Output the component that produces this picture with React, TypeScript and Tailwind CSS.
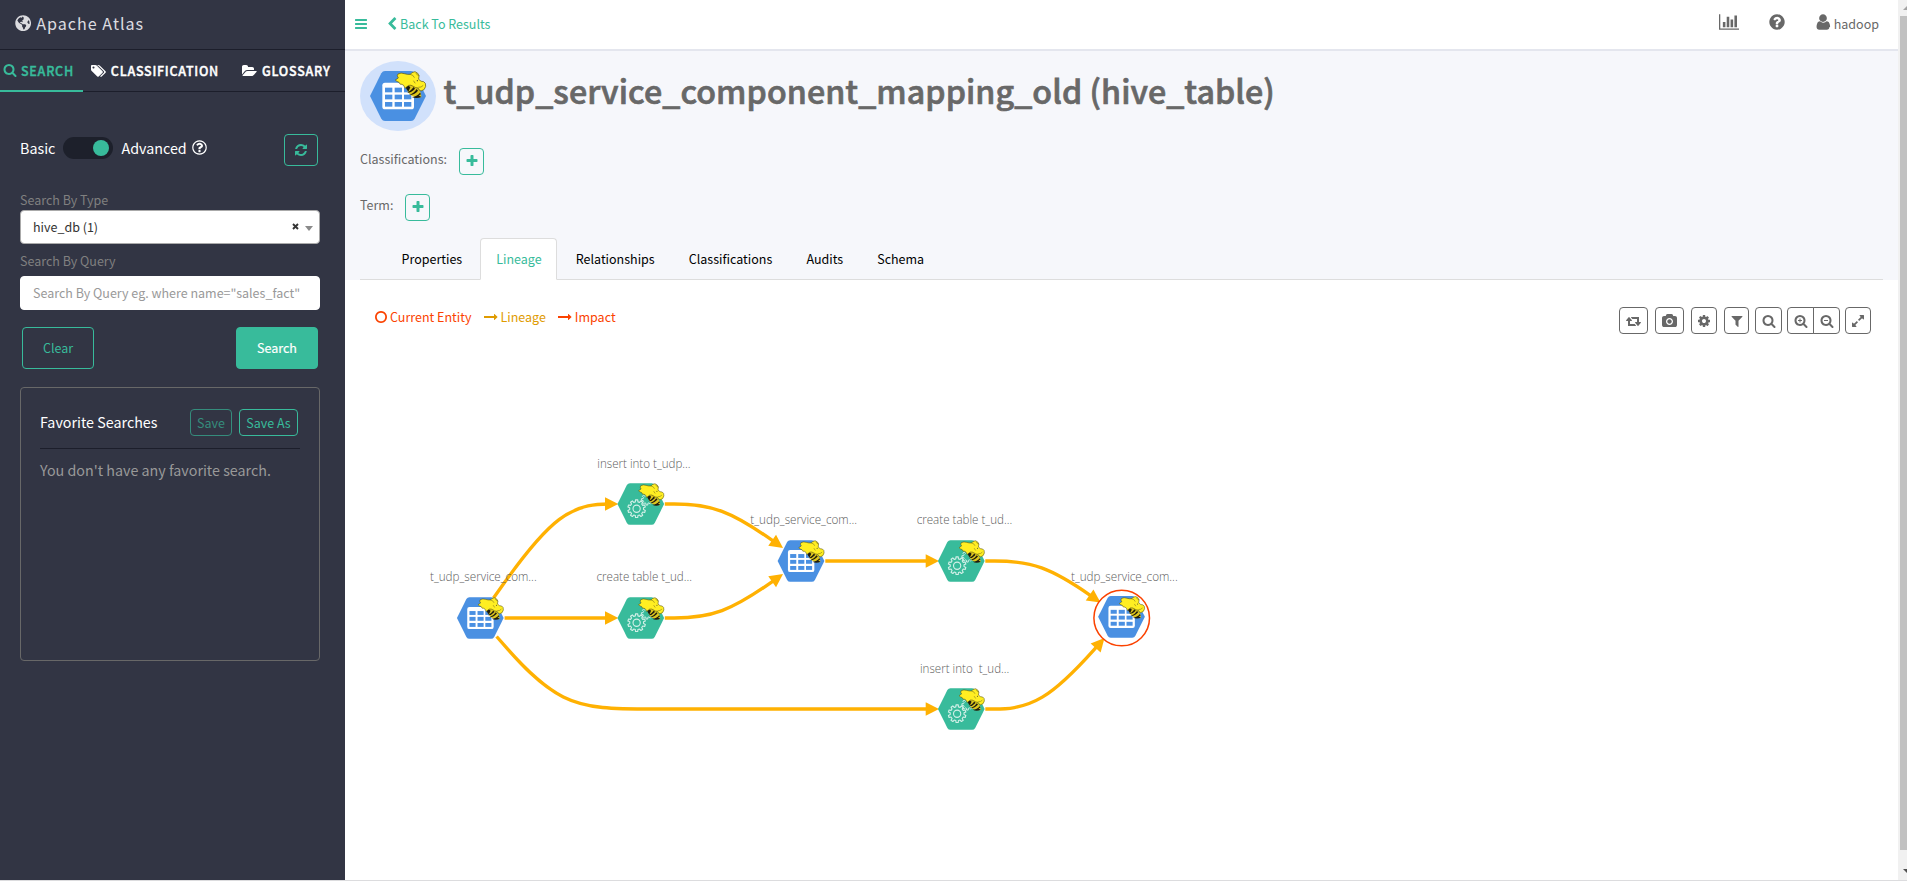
import React from "react";
import { FaGlobeAmericas } from "react-icons/fa";

const FONT = "font-['Noto_Sans_CJK_SC',sans-serif]";

const LENS =
  "M1216 832q0-185-131.5-316.5t-316.5-131.5-316.5 131.5-131.5 316.5 131.5 316.5 316.5 131.5 316.5-131.5 131.5-316.5zm512 832q0 52-38 90t-90 38q-54 0-90-38l-343-342q-179 124-399 124-143 0-273.5-55.5t-225-150-150-225-55.5-273.5 55.5-273.5 150-225 225-150 273.5-55.5 273.5 55.5 225 150 150 225 55.5 273.5q0 220-124 399l343 343q37 37 37 90z";

const ICONS = {
  search: { w: 1792, d: LENS },
  searchPlus: {
    w: 1792,
    d: "M1024 800v64q0 13-9.5 22.5t-22.5 9.5h-160v160q0 13-9.5 22.5t-22.5 9.5h-64q-13 0-22.5-9.5t-9.5-22.5v-160h-160q-13 0-22.5-9.5t-9.5-22.5v-64q0-13 9.5-22.5t22.5-9.5h160v-160q0-13 9.5-22.5t22.5-9.5h64q13 0 22.5 9.5t9.5 22.5v160h160q13 0 22.5 9.5t9.5 22.5z" + LENS,
  },
  searchMinus: {
    w: 1792,
    d: "M1024 800v64q0 13-9.5 22.5t-22.5 9.5h-448q-13 0-22.5-9.5t-9.5-22.5v-64q0-13 9.5-22.5t22.5-9.5h448q13 0 22.5 9.5t9.5 22.5z" + LENS,
  },
  plus: {
    w: 1792,
    d: "M1600 736v192q0 40-28 68t-68 28h-416v416q0 40-28 68t-68 28h-192q-40 0-68-28t-28-68v-416h-416q-40 0-68-28t-28-68v-192q0-40 28-68t68-28h416v-416q0-40 28-68t68-28h192q40 0 68 28t28 68v416h416q40 0 68 28t28 68z",
  },
  refresh: {
    w: 1792,
    d: "M1639 1056q0 5-1 7-64 268-268 434.5t-478 166.5q-146 0-282.5-55t-243.5-157l-129 129q-19 19-45 19t-45-19-19-45v-448q0-26 19-45t45-19h448q26 0 45 19t19 45-19 45l-137 137q71 66 161 102t187 36q134 0 250-65t186-179q11-17 53-117 8-23 30-23h192q13 0 22.5 9.5t9.5 22.5zm25-800v448q0 26-19 45t-45 19h-448q-26 0-45-19t-19-45 19-45l138-138q-148-137-349-137-134 0-250 65t-186 179q-11 17-53 117-8 23-30 23h-199q-13 0-22.5-9.5t-9.5-22.5v-7q65-268 270-434.5t480-166.5q146 0 284 55.5t245 156.5l130-129q19-19 45-19t45 19 19 45z",
  },
  question: {
    w: 1792,
    d: "M1024 1376v-192q0-14-9-23t-23-9h-192q-14 0-23 9t-9 23v192q0 14 9 23t23 9h192q14 0 23-9t9-23zm256-672q0-88-55.5-163t-138.5-116-170-41q-243 0-371 213-15 24 8 42l132 100q7 6 19 6 16 0 25-12 53-68 86-92 34-24 86-24 48 0 85.5 26t37.5 59q0 38-20 61t-68 45q-63 28-115.5 86.5t-52.5 125.5v36q0 14 9 23t23 9h192q14 0 23-9t9-23q0-19 21.5-49.5t54.5-49.5q32-18 49-28.5t46-35 44.5-48 28-60.5 12.5-81zm384 192q0 209-103 385.5t-279.5 279.5-385.5 103-385.5-103-279.5-279.5-103-385.5 103-385.5 279.5-279.5 385.5-103 385.5 103 279.5 279.5 103 385.5z",
  },
  questionOutline: {
    w: 1792,
    d: "M1008 1200v160q0 14-9 23t-23 9h-160q-14 0-23-9t-9-23v-160q0-14 9-23t23-9h160q14 0 23 9t9 23zm256-496q0 50-15 90t-45.5 69-52 44-59.5 36q-32 18-46.5 28t-26 24-11.5 29v32q0 14-9 23t-23 9h-160q-14 0-23-9t-9-23v-68q0-35 10.5-64.5t24-47.5 39-35.5 41-25.5 44.5-21q53-25 75-43t22-49q0-42-43.5-71.5t-95.5-29.5q-56 0-95 27-29 20-80 83-9 12-25 12-11 0-19-6l-108-82q-10-7-12-20t5-23q122-192 349-192 129 0 238.5 89.5t109.5 214.5zm-368-448q-130 0-248.5 51t-204 136.5-136.5 204-51 248.5 51 248.5 136.5 204 204 136.5 248.5 51 248.5-51 204-136.5 136.5-204 51-248.5-51-248.5-136.5-204-204-136.5-248.5-51zm768 640q0 209-103 385.5t-279.5 279.5-385.5 103-385.5-103-279.5-279.5-103-385.5 103-385.5 279.5-279.5 385.5-103 385.5 103 279.5 279.5 103 385.5z",
  },
  user: {
    w: 1792,
    d: "M1536 1405q0 120-73 189.5t-194 69.5h-746q-121 0-194-69.5t-73-189.5q0-53 3.5-103.5t14-109 26.5-108.5 43-97.5 62-81 85.5-53.5 111.5-20q9 0 42 21.5t74.5 48 108 48 70 21.5 133-21.5 108-48 74.5-48 42-21.5q61 0 111.5 20t85.5 53.5 62 81 43 97.5 26.5 108.5 14 109 3.5 103.5zm-256-893q0 159-112.5 271.5t-271.5 112.5-271.5-112.5-112.5-271.5 112.5-271.5 271.5-112.5 271.5 112.5 112.5 271.5z",
  },
  chart: {
    w: 2048,
    d: "M640 896v512h-256v-512h256zm384-512v1024h-256v-1024h256zm1024 1152v128h-2048v-1536h128v1408h1920zm-640-896v768h-256v-768h256zm384-384v1152h-256v-1152h256z",
  },
  bars: {
    w: 1792,
    d: "M1664 1344v128q0 26-19 45t-45 19h-1408q-26 0-45-19t-19-45v-128q0-26 19-45t45-19h1408q26 0 45 19t19 45zm0-512v128q0 26-19 45t-45 19h-1408q-26 0-45-19t-19-45v-128q0-26 19-45t45-19h1408q26 0 45 19t19 45zm0-512v128q0 26-19 45t-45 19h-1408q-26 0-45-19t-19-45v-128q0-26 19-45t45-19h1408q26 0 45 19t19 45z",
  },
  chevronLeft: {
    w: 1792,
    d: "M1427 301l-531 531 531 531q19 19 19 45t-19 45l-166 166q-19 19-45 19t-45-19l-742-742q-19-19-19-45t19-45l742-742q19-19 45-19t45 19l166 166q19 19 19 45t-19 45z",
  },
  folderOpen: {
    w: 1920,
    d: "M1879 952q0 31-31 66l-336 396q-43 51-120.5 86.5t-143.5 35.5h-1088q-34 0-60.5-13t-26.5-43q0-31 31-66l336-396q43-51 120.5-86.5t143.5-35.5h1088q34 0 60.5 13t26.5 43zm-343-344v160h-832q-94 0-197 47.5t-164 119.5l-337 396-5 6q0-4-.5-12.5t-.5-12.5v-960q0-92 66-158t158-66h320q92 0 158 66t66 158v32h544q92 0 158 66t66 158z",
  },
  tags: {
    w: 1899,
    d: "M448 448q0-53-37.5-90.5t-90.5-37.5-90.5 37.5-37.5 90.5 37.5 90.5 90.5 37.5 90.5-37.5 37.5-90.5zm1067 576q0 53-37 90l-491 492q-39 37-91 37-53 0-90-37l-715-716q-38-37-64.5-101t-26.5-117v-416q0-52 38-90t90-38h416q53 0 117 26.5t102 64.5l715 714q37 39 37 91zm384 0q0 53-37 90l-491 492q-39 37-91 37-36 0-59-14t-53-45l470-470q37-37 37-90 0-52-37-91l-715-714q-38-38-102-64.5t-117-26.5h224q53 0 117 26.5t102 64.5l715 714q37 39 37 91z",
  },
  camera: {
    w: 1920,
    d: "M960 672q119 0 203.5 84.5t84.5 203.5-84.5 203.5-203.5 84.5-203.5-84.5-84.5-203.5 84.5-203.5 203.5-84.5zm704-416q106 0 181 75t75 181v896q0 106-75 181t-181 75h-1408q-106 0-181-75t-75-181v-896q0-106 75-181t181-75h224l51-136q19-49 69.5-84.5t103.5-35.5h512q53 0 103.5 35.5t69.5 84.5l51 136h224zm-704 1152q185 0 316.5-131.5t131.5-316.5-131.5-316.5-316.5-131.5-316.5 131.5-131.5 316.5 131.5 316.5 316.5 131.5z",
  },
  cog: {
    w: 1792,
    d: "M1152 896q0-106-75-181t-181-75-181 75-75 181 75 181 181 75 181-75 75-181zm512-109v222q0 12-8 23t-20 13l-185 28q-19 54-39 91 35 50 107 138 10 12 10 25t-9 23q-27 37-99 108t-94 71q-12 0-26-9l-138-108q-44 23-91 38-16 136-29 186-7 28-36 28h-222q-14 0-24.5-8.5t-11.5-21.5l-28-184q-49-16-90-37l-141 107q-10 9-25 9-14 0-25-11-126-114-165-168-7-10-7-23 0-12 8-23 15-21 51-66.5t54-70.5q-27-50-41-99l-183-27q-13-2-21-12.5t-8-23.5v-222q0-12 8-23t19-13l186-28q14-46 39-92-40-57-107-138-10-12-10-24 0-10 9-23 26-36 98.5-107.5t94.5-71.5q13 0 26 10l138 107q44-23 91-38 16-136 29-186 7-28 36-28h222q14 0 24.5 8.5t11.5 21.5l28 184q49 16 90 37l142-107q9-9 24-9 13 0 25 10 129 119 165 170 7 8 7 22 0 12-8 23-15 21-51 66.5t-54 70.5q26 50 41 98l183 28q13 2 21 12.5t8 23.5z",
  },
  filter: {
    w: 1792,
    d: "M1595 295q17 41-14 70l-493 493v742q0 42-39 59-13 5-25 5-27 0-45-19l-256-256q-19-19-19-45v-486l-493-493q-31-29-14-70 17-39 59-39h1280q42 0 59 39z",
  },
  retweet: {
    w: 1920,
    d: "M1280 1504q0 13-9.5 22.5t-22.5 9.5h-960q-8 0-13.5-2t-9-7-5.5-8-3-11.5-1-11.5v-600h-192q-26 0-45-19t-19-45q0-24 15-41l320-384q19-22 49-22t49 22l320 384q15 17 15 41 0 26-19 45t-45 19h-192v384h576q16 0 25 11l160 192q7 10 7 21zm640-416q0 24-15 41l-320 384q-20 23-49 23t-49-23l-320-384q-15-17-15-41 0-26 19-45t45-19h192v-384h-576q-16 0-25-12l-160-192q-7-9-7-20 0-13 9.5-22.5t22.5-9.5h960q8 0 13.5 2t9 7 5.5 8 3 11.5 1 11.5v600h192q26 0 45 19t19 45z",
  },
  expand: {
    w: 1792,
    d: "M883 1056q0 13-10 23l-332 332 144 144q19 19 19 45t-19 45-45 19h-448q-26 0-45-19t-19-45v-448q0-26 19-45t45-19 45 19l144 144 332-332q10-10 23-10t23 10l114 114q10 10 10 23zm781-864v448q0 26-19 45t-45 19-45-19l-144-144-332 332q-10 10-23 10t-23-10l-114-114q-10-10-10-23t10-23l332-332-144-144q-19-19-19-45t19-45 45-19h448q26 0 45 19t19 45z",
  },
  circle: {
    w: 1792,
    d: "M896 352q-148 0-273 73t-198 198-73 273 73 273 198 198 273 73 273-73 198-198 73-273-73-273-198-198-273-73zm768 544q0 209-103 385.5t-279.5 279.5-385.5 103-385.5-103-279.5-279.5-103-385.5 103-385.5 279.5-279.5 385.5-103 385.5 103 279.5 279.5 103 385.5z",
  },
  arrowRight: {
    w: 1792,
    d: "M1728 893q0 14-10 24l-384 354q-16 14-35 6-19-9-19-29v-224h-1248q-14 0-23-9t-9-23v-192q0-14 9-23t23-9h1248v-224q0-21 19-29t35 5l384 350q10 10 10 23z",
  },
};

function Icon({ name, size = 14, className = "" }: { name: keyof typeof ICONS; size?: number; className?: string }) {
  const icon = ICONS[name];
  return (
    <svg
      className={"shrink-0 " + className}
      width={(icon.w / 1792) * size}
      height={size}
      viewBox={`0 0 ${icon.w} 1792`}
      fill="currentColor"
    >
      <path d={icon.d} />
    </svg>
  );
}

/* ---------- entity artwork ---------- */

function gearPath(cx: number, cy: number, outer: number, inner: number, teeth: number) {
  const step = (Math.PI * 2) / teeth;
  const pts: string[] = [];
  for (let i = 0; i < teeth; i++) {
    const a = i * step - Math.PI / 2;
    const offsets: [number, number][] = [
      [-0.3, inner],
      [-0.2, outer],
      [0.2, outer],
      [0.3, inner],
    ];
    offsets.forEach(([o, r]) => {
      const t = a + o * step;
      pts.push(`${(cx + r * Math.cos(t)).toFixed(1)} ${(cy + r * Math.sin(t)).toFixed(1)}`);
    });
  }
  return "M" + pts.join("L") + "Z";
}

function HiveBee() {
  return (
    <g>
      <path d="M183 257Q196 250 210 256L220 266Q229 276 229 292Q212 294 200 287Q186 277 183 257Z" fill="#dcc51e" />
      <path
        d="M181 259Q184 270 190 275L196 262Q190 255 181 259ZM187 278Q198 279 210 266L206 261Q199 271 187 278ZM192 285Q207 286 219 272L215 267Q207 280 192 285ZM200 291Q216 290 225 278L228 283L221 286L229 291Q214 297 200 291Z"
        fill="#1d1b0e"
      />
      <path
        d="M151 240L160 234Q154 227 159 222Q168 217 178 221Q188 224 196 223Q200 216 210 215Q220 218 222 227L221 238Q228 246 236 245Q243 248 242 259Q240 271 228 273Q221 271 219 264Q211 264 205 259Q198 254 191 256L180 265Q178 255 171 253Q164 255 162 247Q155 245 151 240Z"
        fill="#ffee22"
        stroke="#57500f"
        strokeWidth="2"
        strokeLinejoin="round"
      />
      <path
        d="M196 223Q205 224 208 232M222 227Q215 226 213 220M221 262Q229 263 234 257M206 243L210 249"
        fill="none"
        stroke="#7c721c"
        strokeWidth="2"
        strokeLinecap="round"
      />
      <circle cx="217" cy="242" r="1.8" fill="#333" />
    </g>
  );
}

function EntityShape({ kind }: { kind: "table" | "process" }) {
  const color = kind === "table" ? "#4a90e2" : "#38bb9b";
  return (
    <g>
      <path
        d="M120 213H198Q205 213 209 220L243 288L209 356Q205 363 198 363H120Q113 363 109 356L75 288L109 220Q113 213 120 213Z"
        fill={color}
      />
      {kind === "table" ? (
        <g>
          <rect x="112" y="248" width="95" height="80" rx="8" fill="#fff" />
          {[263, 284, 306].map((y) =>
            [120, 149, 177].map((x) => <rect key={`${x}-${y}`} x={x} y={y} width="22" height="14" fill={color} />)
          )}
        </g>
      ) : (
        <g fill="none" stroke="#d3f0e8" strokeWidth="4" strokeLinejoin="round">
          <path d={gearPath(144, 305, 32, 25, 10)} />
          <circle cx="144" cy="305" r="13" />
          <path d={gearPath(181, 272, 20, 14, 8)} strokeWidth="3.5" />
        </g>
      )}
      <HiveBee />
    </g>
  );
}

/* ---------- lineage graph ---------- */

type Pt = [number, number];

const NODES: { x: number; y: number; kind: "table" | "process"; label: string; lx: number; ly: number; lw: number }[] = [
  { x: 480.3, y: 618, kind: "table", label: "t_udp_service_com...", lx: 430, ly: 580.7, lw: 106.7 },
  { x: 640.8, y: 504, kind: "process", label: "insert into t_udp...", lx: 597.3, ly: 467.7, lw: 93.3 },
  { x: 640.8, y: 618, kind: "process", label: "create table t_ud...", lx: 596.5, ly: 580.7, lw: 95.5 },
  { x: 801, y: 561, kind: "table", label: "t_udp_service_com...", lx: 750.3, ly: 524, lw: 106.7 },
  { x: 961.3, y: 561, kind: "process", label: "create table t_ud...", lx: 916.7, ly: 524, lw: 95.5 },
  { x: 961.3, y: 709, kind: "process", label: "insert into\u00a0 t_ud...", lx: 920, ly: 673, lw: 89.3 },
  { x: 1121.5, y: 616.8, kind: "table", label: "t_udp_service_com...", lx: 1071, ly: 581, lw: 106.7 },
];

const EDGES: Pt[][] = [
  [[493.5, 598], [560.6, 504], [618.3, 504]],
  [[504.6, 618], [560.6, 618], [618.3, 618]],
  [[496.6, 636.5], [560.6, 709], [640.7, 709], [801, 709], [939, 709]],
  [[664.8, 504], [721, 504], [783, 548]],
  [[664.8, 618], [721, 618], [783, 574]],
  [[825.3, 561], [881, 561], [939, 561]],
  [[985.3, 561], [1041, 561], [1100.5, 602.5]],
  [[985.3, 709], [1041, 709], [1104.5, 638]],
];

const ARROW = 13.3;

function mix(a: Pt, b: Pt, t: number): Pt {
  return [a[0] + (b[0] - a[0]) * t, a[1] + (b[1] - a[1]) * t];
}

function basis(p: Pt[]) {
  const n = p.length;
  const end = p[n - 1];
  let d = `M${p[0]}L${mix(p[0], p[1], 1 / 6)}`;
  for (let i = 1; i < n; i++) {
    const a = p[i - 1];
    const b = p[i];
    const c1 = mix(a, b, 1 / 3);
    const c2 = mix(a, b, 2 / 3);
    const next = i < n - 1 ? p[i + 1] : null;
    const stop: Pt = next
      ? [(a[0] + 4 * b[0] + next[0]) / 6, (a[1] + 4 * b[1] + next[1]) / 6]
      : mix(a, b, 5 / 6);
    d += `C${c1} ${c2} ${stop}`;
  }
  const len = Math.hypot(end[0] - p[n - 2][0], end[1] - p[n - 2][1]);
  return d + `L${mix(p[n - 2], end, Math.max(5 / 6, 1 - (ARROW - 4) / len))}`;
}

function Edge({ points }: { points: Pt[] }) {
  const end = points[points.length - 1];
  const prev = points[points.length - 2];
  const angle = (Math.atan2(end[1] - prev[1], end[0] - prev[0]) * 180) / Math.PI;
  return (
    <g>
      <path d={basis(points)} fill="none" stroke="#ffb102" strokeWidth="3.3" />
      <path d="M0 0L-13.3 -6.7V6.7Z" fill="#ffb102" transform={`translate(${end}) rotate(${angle})`} />
    </g>
  );
}

function LineageGraph() {
  return (
    <svg className="block" width="1553" height="546" viewBox="345 334 1553 546">
      {EDGES.map((e, i) => (
        <Edge key={i} points={e} />
      ))}
      <circle cx="1121.7" cy="618" r="27.8" fill="#fff" stroke="#fb4200" strokeWidth="1.5" />
      {NODES.map((n, i) => (
        <g key={i}>
          <g transform={`translate(${n.x} ${n.y}) scale(0.2780) translate(-159 -288)`}>
            <EntityShape kind={n.kind} />
          </g>
          <text
            x={n.lx}
            y={n.ly}
            textLength={n.lw}
            lengthAdjust="spacingAndGlyphs"
            className="fill-[#5c5c5c] font-['Open_Sans',sans-serif] text-[13px] font-light"
          >
            {n.label}
          </text>
        </g>
      ))}
    </svg>
  );
}

/* ---------- sidebar ---------- */

function Sidebar() {
  return (
    <aside className="flex h-[880px] w-[345px] shrink-0 flex-col bg-[#323544]">
      <div className="flex h-[50px] items-center border-b border-[#1c1e2b] pb-[2px] pl-[15px] text-[#dcdce0]">
        <FaGlobeAmericas size={16.3} className="shrink-0" />
        <span className="-mt-px ml-[5px] text-[16.1px] leading-[24px] tracking-[1px]">Apache Atlas</span>
      </div>
      <nav className="flex h-[42px] border-b border-[#1c1e2b] text-[12.5px] font-medium tracking-[0.75px] text-white [-webkit-text-stroke:0.4px]">
        <div className="-mb-px flex w-[83px] items-center border-b-2 border-[#38bb9b] pl-[2.5px] text-[#38bb9b]">
          <Icon name="search" />
          <span className="ml-[4.5px] mt-[2px]">SEARCH</span>
        </div>
        <div className="flex w-[159px] items-center pl-[8px]">
          <Icon name="tags" />
          <span className="ml-[5px] mt-px">CLASSIFICATION</span>
        </div>
        <div className="flex items-center">
          <Icon name="folderOpen" />
          <span className="ml-[5px] mt-px">GLOSSARY</span>
        </div>
      </nav>

      <div className="mt-[42px] flex h-[32px] items-start pl-[20px] pr-[27px] text-[14.3px] leading-[28px] text-white">
        <span className="w-[43px]">Basic</span>
        <span className="mt-[3px] flex h-[22px] w-[50px] items-center justify-end rounded-full bg-[#1d202b] pr-[4px]">
          <span className="h-[16px] w-[16px] rounded-full bg-[#38bb9b]" />
        </span>
        <span className="ml-[8.5px]">Advanced</span>
        <Icon name="questionOutline" size={17} className="ml-[4px] mt-[5px]" />
        <button className="ml-auto flex h-[32px] w-[34px] items-center justify-center rounded-[4px] border border-[#38bb9b] text-[#38bb9b]">
          <Icon name="refresh" />
        </button>
      </div>

      <div className="mt-[24px] flex flex-col pl-[20px] pr-[25px] text-[12.5px]">
        <label className="h-[20px] leading-[20px] text-[#808080]">Search By Type</label>
        <div className="flex h-[34px] items-center rounded-[4px] border border-[#aaa] bg-white pl-[12px] pr-[6px] leading-[32px] text-[#333]">
          <span className="flex-1">hive_db (1)</span>
          <svg width="7" height="7" viewBox="0 0 7 7" className="mb-px text-[#333]">
            <path d="M1 1L6 6M6 1L1 6" stroke="currentColor" strokeWidth="1.9" />
          </svg>
          <svg width="8" height="5" viewBox="0 0 8 5" className="ml-[6px] mt-[3px]">
            <path d="M0 0H8L4 5Z" fill="#8a8a8a" />
          </svg>
        </div>
        <label className="mt-[7px] h-[20px] leading-[20px] text-[#808080]">Search By Query</label>
        <div className="mt-[5px] flex h-[34px] items-center rounded-[4px] border border-white bg-white pl-[12px] leading-[32px] text-[#999]">
          <span className="whitespace-nowrap">Search By Query eg. where name=&quot;sales_fact&quot;</span>
        </div>
        <div className="mt-[17px] flex justify-between px-[2px]">
          <button className="h-[42px] w-[72px] rounded-[4px] border border-[#38bb9b] leading-[40px] text-[#38bb9b]">Clear</button>
          <button className="h-[42px] w-[82px] rounded-[4px] border border-[#38bb9b] bg-[#38bb9b] leading-[40px] text-white [-webkit-text-stroke:0.2px]">
            Search
          </button>
        </div>

        <section className="mt-[18px] flex h-[274px] flex-col rounded-[4px] border border-[#686868] px-[19px] pt-[21px]">
          <div className="flex h-[40px] items-start border-b border-[#1c1e2b] pr-[2px]">
            <h2 className="flex-1 text-[14.3px] leading-[26px] text-white">Favorite Searches</h2>
            <button className="h-[27px] w-[42px] rounded-[4px] border border-[#38bb9b] leading-[25px] text-[#38bb9b] opacity-65">
              Save
            </button>
            <button className="ml-[7px] h-[27px] w-[59px] rounded-[4px] border border-[#38bb9b] leading-[25px] text-[#38bb9b]">
              Save As
            </button>
          </div>
          <p className="mt-[9px] text-[14.3px] leading-[24px] text-[#999]">You don&apos;t have any favorite search.</p>
        </section>
      </div>
    </aside>
  );
}

/* ---------- main area ---------- */

function TopBar() {
  return (
    <header className="flex h-[51px] items-center border-b-2 border-[#e4e6ee] bg-white pb-[2px] pl-[9px] pr-[19px] text-[12.5px] text-[#686868]">
      <Icon name="bars" className="mt-px text-[#38bb9b]" />
      <div className="ml-[17px] flex items-center text-[#38bb9b]">
        <Icon name="chevronLeft" />
        <span className="ml-px mt-px">Back To Results</span>
      </div>
      <div className="flex-1" />
      <Icon name="chart" size={18} className="-mt-[3px]" />
      <Icon name="question" size={18} className="-mt-[3px] ml-[28.5px]" />
      <Icon name="user" size={18} className="-mt-[3px] ml-[28px]" />
      <span className="ml-[2px] mt-px">hadoop</span>
    </header>
  );
}

function AddButton({ className }: { className: string }) {
  return (
    <button
      className={"flex h-[27px] w-[25px] items-center justify-center rounded-[4px] border border-[#38bb9b] text-[#38bb9b] " + className}
    >
      <Icon name="plus" className="-mt-px ml-px" />
    </button>
  );
}

const TABS = ["Properties", "Lineage", "Relationships", "Classifications", "Audits", "Schema"];

function EntityHeader() {
  return (
    <section className="flex h-[229px] flex-col bg-[#f6f7fb] px-[15px] text-[12.5px] text-[#686868]">
      <div className="mt-[10px] flex h-[70px]">
        <svg width="76" height="70" viewBox="0 0 76 70" className="shrink-0">
          <ellipse cx="38" cy="35" rx="38" ry="35" fill="#d1e1fb" />
          <g transform="translate(-15 -61) scale(0.33333)">
            <EntityShape kind="table" />
          </g>
        </svg>
        <h1 className="ml-[7.5px] h-[58px] whitespace-nowrap text-[32.2px] font-medium leading-[58px] tracking-[0.07px] [-webkit-text-stroke:0.7px]">
          t_udp_service_component_mapping_old (hive_table)
        </h1>
      </div>
      <div className="mt-[17px] flex h-[27px] items-start leading-[21px]">
        <span>Classifications:</span>
        <AddButton className="ml-[12px]" />
      </div>
      <div className="mt-[19px] flex h-[27px] items-start leading-[21px]">
        <span>Term:</span>
        <AddButton className="ml-[11.5px]" />
      </div>
      <div className="mt-[17px] flex h-[42px] shrink-0 border-b border-[#ddd] pl-[25px] text-black">
        {TABS.map((t) => (
          <div
            key={t}
            className={
              "-mb-px mr-[2.1px] h-[42px] rounded-t-[4px] border pl-[15.5px] pr-[14.5px] leading-[40px] " +
              (t === "Lineage" ? "border-[#ddd] border-b-white bg-white text-[#38bb9b]" : "border-transparent")
            }
          >
            {t}
          </div>
        ))}
      </div>
    </section>
  );
}

const BTN = "flex h-[27px] items-center justify-center rounded-[4px] border border-[#686868]";

function LineageBar() {
  return (
    <div className="flex h-[54px] items-start pl-[28.5px] pr-[27px] text-[12.5px] text-[#686868]">
      <div className="mt-[26px] flex h-[21px] items-center leading-[21px]">
        <span className="flex items-center text-[#fb4200]">
          <Icon name="circle" />
          <span className="ml-[2.5px]">Current Entity</span>
        </span>
        <span className="ml-[12.5px] flex items-center text-[#df9b00]">
          <Icon name="arrowRight" />
          <span className="ml-[2.5px]">Lineage</span>
        </span>
        <span className="ml-[12.5px] flex items-center text-[#fb4200]">
          <Icon name="arrowRight" />
          <span className="ml-[2.5px]">Impact</span>
        </span>
      </div>
      <div className="flex-1" />
      <div className="mt-[27px] flex">
        <button className={BTN + " w-[29px]"}><Icon name="retweet" /></button>
        <button className={BTN + " ml-[7px] w-[29px]"}><Icon name="camera" /></button>
        <button className={BTN + " ml-[7px] w-[26px]"}><Icon name="cog" /></button>
        <button className={BTN + " ml-[7px] w-[25px]"}><Icon name="filter" /></button>
        <button className={BTN + " ml-[6px] w-[27px]"}><Icon name="search" /></button>
        <button className={BTN + " ml-[5px] w-[27px] rounded-r-none"}><Icon name="searchPlus" /></button>
        <button className={BTN + " -ml-px w-[27px] rounded-l-none"}><Icon name="searchMinus" /></button>
        <button className={BTN + " ml-[5px] w-[26px]"}><Icon name="expand" /></button>
      </div>
    </div>
  );
}

function ScrollBar() {
  return (
    <div className="flex h-[880px] w-[9px] shrink-0 flex-col bg-[#f1f1f1] pl-[2px]">
      <div className="h-[16px]">
        <svg width="7" height="16" viewBox="0 0 7 16">
          <path d="M7.5 5.5L3 10H7.5Z" fill="#a3a3a3" />
        </svg>
      </div>
      <div className="h-[834px] bg-[#c1c1c1]" />
      <svg width="7" height="30" viewBox="0 0 7 30">
        <path d="M3 19H7.5V23.5Z" fill="#505050" />
      </svg>
    </div>
  );
}

export default function App() {
  return (
    <div className={"flex h-[883px] w-[1907px] flex-col overflow-hidden bg-white " + FONT}>
      <div className="flex h-[880px]">
        <Sidebar />
        <main className="flex w-[1553px] flex-col bg-white">
          <TopBar />
          <EntityHeader />
          <LineageBar />
          <LineageGraph />
        </main>
        <ScrollBar />
      </div>
      <div className="h-px bg-[#dcdcde]" />
    </div>
  );
}
